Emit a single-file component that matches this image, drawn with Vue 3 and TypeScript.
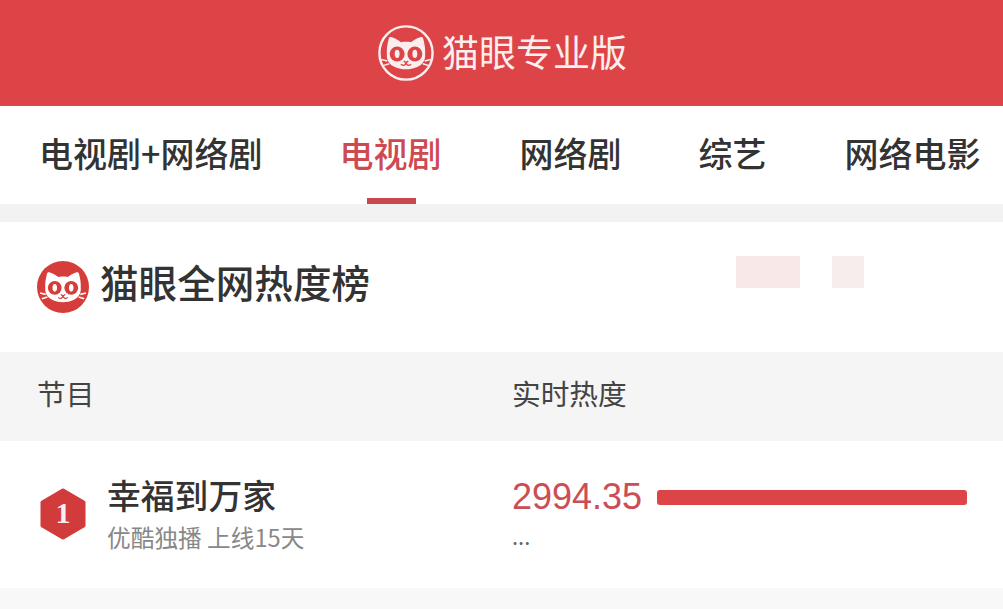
<script setup lang="ts">
const tabs = [
  { name: "电视剧+网络剧", active: false },
  { name: "电视剧", active: true },
  { name: "网络剧", active: false },
  { name: "综艺", active: false },
  { name: "网络电影", active: false },
];

// cat head shared by both logos, drawn in a 60x60 box
const headPath =
  "M11.5 15 C11.8 13 13 12.5 15 13.2 C19 14.5 22 16.5 24.5 18.5 C28 17.8 32 17.8 35.5 18.5 C38 16.5 41 14.5 45 13.2 C47 12.5 48.2 13 48.5 15 C50 20 50.8 26 50.5 31 C51 38 47.5 42.5 42 45 C38 46.8 34 47.5 30 47.5 C26 47.5 22 46.8 18 45 C12.5 42.5 9 38 9.5 31 C9.2 26 10 20 11.5 15 Z";
const mouthPath = "M27.5 38.5 L30 40.5 L32.5 38.5 M24.5 42 C27 44 29 43.5 30 40.5 C31 43.5 33 44 35.5 42";
const whiskerPath = "M3.5 37 L10 38.5 M5.5 43.5 L12 41.5 M56.5 37 L50 38.5 M54.5 43.5 L48 41.5";
</script>

<template>
  <div class="page">
    <header class="top">
      <svg class="top-logo" viewBox="0 0 60 60">
        <circle cx="30" cy="30" r="28.5" fill="none" stroke="#fbeeee" stroke-width="2.6" />
        <path :d="headPath" fill="#fbeeee" />
        <circle cx="20.5" cy="31" r="8" fill="#dd4448" />
        <circle cx="39.5" cy="31" r="8" fill="#dd4448" />
        <ellipse cx="20.5" cy="31" rx="2.6" ry="4.4" fill="#fbeeee" />
        <ellipse cx="39.5" cy="31" rx="2.6" ry="4.4" fill="#fbeeee" />
        <path :d="mouthPath" fill="none" stroke="#dd4448" stroke-width="1.4" />
        <path :d="whiskerPath" stroke="#fbeeee" stroke-width="1.6" />
      </svg>
      <span class="top-title">猫眼专业版</span>
    </header>

    <nav class="tabs">
      <div v-for="tab in tabs" :key="tab.name" class="tab" :class="{ active: tab.active }">
        {{ tab.name }}
      </div>
    </nav>

    <section class="board">
      <div class="board-title">
        <svg class="board-logo" viewBox="0 0 60 60">
          <circle cx="30" cy="30" r="30" fill="#d63c3a" />
          <path :d="headPath" fill="#fff" />
          <circle cx="20.5" cy="31" r="8" fill="#d63c3a" />
          <circle cx="39.5" cy="31" r="8" fill="#d63c3a" />
          <ellipse cx="20.5" cy="31" rx="2.6" ry="4.4" fill="#fff" />
          <ellipse cx="39.5" cy="31" rx="2.6" ry="4.4" fill="#fff" />
          <path :d="mouthPath" fill="none" stroke="#d63c3a" stroke-width="1.4" />
          <path :d="whiskerPath" stroke="#fff" stroke-width="1.8" />
        </svg>
        <h2>猫眼全网热度榜</h2>
        <div class="marks">
          <i class="mark wide"></i>
          <i class="mark"></i>
        </div>
      </div>

      <div class="thead">
        <span class="col-name">节目</span>
        <span>实时热度</span>
      </div>

      <div class="row">
        <div class="show">
          <div class="rank">
            <svg viewBox="0 0 46 52">
              <polygon
                points="23,2.5 43.5,14.5 43.5,37.5 23,49.5 2.5,37.5 2.5,14.5"
                fill="#d13b3b"
                stroke="#d13b3b"
                stroke-width="4"
                stroke-linejoin="round"
              />
            </svg>
            <b>1</b>
          </div>
          <div>
            <div class="show-name">幸福到万家</div>
            <div class="show-sub">优酷独播 上线15天</div>
          </div>
        </div>
        <div class="heat">
          <div class="heat-line">
            <span class="heat-num">2994.35</span>
            <div class="heat-bar"></div>
          </div>
          <div class="heat-more">...</div>
        </div>
      </div>
    </section>
    <div class="rest"></div>
  </div>
</template>

<style scoped>
.page {
  width: 1003px;
  height: 609px;
  overflow: hidden;
  background: #fff;
  font-family: "Noto Sans CJK SC", "Liberation Sans", sans-serif;
  color: #333;
}

.top {
  height: 106px;
  background: #dd4448;
  display: flex;
  align-items: center;
  justify-content: center;
  gap: 8px;
  padding-left: 2px;
  box-sizing: border-box;
}

.top-logo {
  width: 56px;
  height: 56px;
}

.top-title {
  font-size: 37px;
  line-height: 1;
  color: #fbeeee;
  margin-bottom: 4px;
}

.tabs {
  height: 98px;
  display: flex;
  padding-left: 39px;
  border-bottom: 18px solid #f2f2f2;
}

.tab {
  position: relative;
  font-size: 34px;
  font-weight: 500;
  line-height: 94px;
  height: 98px;
  white-space: nowrap;
}

.tab:nth-child(1) {
  margin-right: 77px;
}

.tab:nth-child(2) {
  margin-right: 78px;
}

.tab:nth-child(3) {
  margin-right: 77px;
}

.tab:nth-child(4) {
  margin-right: 78px;
}

.tab.active {
  color: #cf4a50;
}

.tab.active::after {
  content: "";
  position: absolute;
  left: 28px;
  bottom: 0;
  width: 49px;
  height: 6px;
  background: #c9484e;
}

.board-title {
  height: 130px;
  display: flex;
  align-items: center;
  padding-left: 37px;
}

.board-logo {
  width: 52px;
  height: 52px;
}

.board-title h2 {
  margin: 0 0 11px 11px;
  font-size: 38.6px;
  font-weight: 500;
  line-height: 1;
}

.marks {
  display: flex;
  gap: 32px;
  margin-left: 366px;
  margin-top: -30px;
}

.mark {
  display: block;
  width: 32px;
  height: 32px;
  background: #f7eded;
}

.mark.wide {
  width: 64px;
  background: #f8e8e8;
}

.thead {
  height: 89px;
  background: #f5f5f5;
  display: flex;
  align-items: center;
  padding: 0 0 8px 37px;
  box-sizing: border-box;
  font-size: 28.7px;
  color: #444;
}

.col-name {
  width: 475px;
  flex-shrink: 0;
}

.row {
  height: 147px;
  display: flex;
  padding-left: 40px;
}

.show {
  display: flex;
  flex-shrink: 0;
  width: 472px;
  padding-top: 30px;
  box-sizing: border-box;
  gap: 21px;
}

.rank {
  position: relative;
  width: 46px;
  height: 52px;
  margin-top: 17px;
}

.rank svg {
  display: block;
  width: 46px;
  height: 52px;
}

.rank b {
  position: absolute;
  inset: 0;
  text-align: center;
  line-height: 50px;
  font-family: "Liberation Serif", serif;
  font-size: 30px;
  color: #fbeeee;
}

.show-name {
  font-size: 33.8px;
  font-weight: 500;
  line-height: 48px;
}

.show-sub {
  font-size: 23.7px;
  line-height: 36px;
  color: #888;
  white-space: nowrap;
}

.heat {
  padding-top: 34px;
}

.heat-line {
  display: flex;
  align-items: center;
  gap: 15px;
  height: 44px;
}

.heat-num {
  font-family: "Liberation Sans", sans-serif;
  font-size: 36px;
  color: #cd4d56;
}

.heat-bar {
  width: 310px;
  height: 15px;
  background: #dd4448;
  border-radius: 3px;
}

.heat-more {
  font-size: 22px;
  line-height: 32px;
  color: #666;
}

.rest {
  height: 21px;
  background: #f8f8f8;
}
</style>
